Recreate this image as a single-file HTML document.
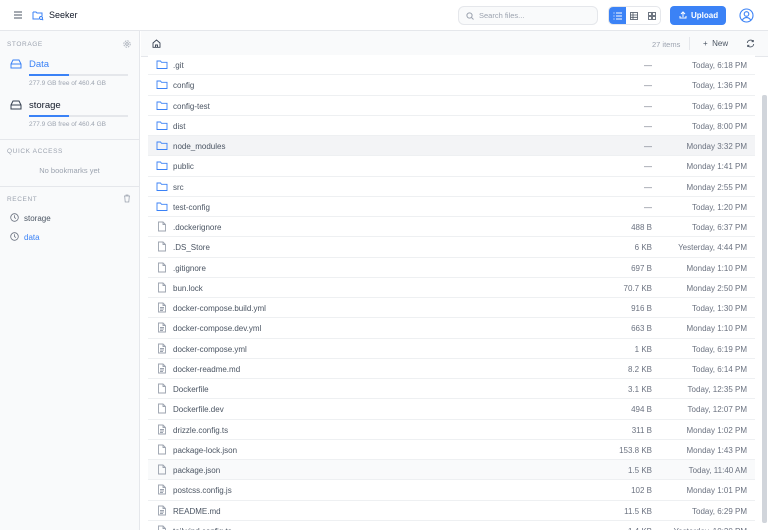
<!DOCTYPE html>
<html style="width:768px;height:530px;overflow:hidden"><head><meta charset="utf-8"><style>
*{box-sizing:border-box;margin:0;padding:0}
body{width:768px;height:530px;overflow:hidden;font-family:"Liberation Sans",sans-serif;background:#fff;position:relative;color:#374151}
.top{position:absolute;left:0;top:0;width:768px;height:31px;background:#fff;border-bottom:1px solid #e5e7eb}
.side{position:absolute;left:0;top:31px;width:140px;height:499px;background:#f9fafb;border-right:1px solid #e5e7eb}
.lbl{position:absolute;left:7px;font-size:6.5px;letter-spacing:.6px;color:#9ca3af}
.main{position:absolute;left:141px;top:31px;width:627px;height:499px}
.bar{position:absolute;left:0;top:0;width:627px;height:26px;background:#f9fafb;border-bottom:1px solid #e5e7eb}
#rows{position:absolute;left:0;top:0;width:768px;height:530px;overflow:hidden}
.row{position:absolute;left:148px;width:607px;height:20.25px;border-bottom:1px solid #eef0f2;font-size:8px;color:#4b5563}
.row .n{position:absolute;left:25px;top:6px}
.row .s{position:absolute;right:103px;top:6px;color:#6b7280}
.row .d{position:absolute;right:8px;top:6px;color:#6b7280}
.row svg{position:absolute;left:8px;top:4px}
</style></head><body>
<div class="top">
<svg style="position:absolute;left:13px;top:10px" width="10" height="10" viewBox="0 0 10 10"><path d="M1 2h8M1 5h8M1 8h8" stroke="#4b5563" stroke-width="1"/></svg>
<svg style="position:absolute;left:32px;top:9px" width="12" height="12" viewBox="0 0 12 12" fill="none" stroke="#3b82f6" stroke-width="1"><path d="M1 3v7h6M1 3h3l1 1h5v3"/><circle cx="9" cy="9" r="1.5"/><path d="M10 10l1.2 1.2"/></svg>
<div style="position:absolute;left:49px;top:10px;font-size:9px;color:#111827">Seeker</div>
<div style="position:absolute;left:458px;top:6px;width:140px;height:19px;border:1px solid #e5e7eb;border-radius:6px;background:#f9fafb"><svg style="position:absolute;left:7px;top:5px" width="8" height="8" viewBox="0 0 8 8" fill="none" stroke="#9ca3af"><circle cx="3.5" cy="3.5" r="2.6"/><path d="M5.5 5.5l2 2"/></svg><span style="position:absolute;left:20px;top:4px;font-size:7.5px;color:#9ca3af">Search files...</span></div>
<div style="position:absolute;left:608px;top:6px;width:53px;height:19px;border:1px solid #e5e7eb;border-radius:5px;background:#fff;overflow:hidden"><div style="position:absolute;left:0;top:0;width:17px;height:19px;background:#3b82f6"></div>
<svg style="position:absolute;left:4px;top:5px" width="9" height="8" viewBox="0 0 9 8" stroke="#fff"><path d="M3 1h6M3 4h6M3 7h6M0.5 1h1M0.5 4h1M0.5 7h1"/></svg>
<svg style="position:absolute;left:21px;top:5px" width="8" height="8" viewBox="0 0 8 8" fill="none" stroke="#4b5563" stroke-width=".8"><rect x=".5" y=".5" width="7" height="7"/><path d="M.5 3h7M.5 5.3h7M3 .5v7"/></svg>
<svg style="position:absolute;left:39px;top:5px" width="8" height="8" viewBox="0 0 8 8" fill="none" stroke="#4b5563" stroke-width=".8"><rect x=".5" y=".5" width="3" height="3"/><rect x="4.5" y=".5" width="3" height="3"/><rect x=".5" y="4.5" width="3" height="3"/><rect x="4.5" y="4.5" width="3" height="3"/></svg></div>
<div style="position:absolute;left:670px;top:6px;width:56px;height:19px;background:#3b82f6;border-radius:4px;color:#fff;font-size:8px;font-weight:bold"><svg style="position:absolute;left:9px;top:5px" width="8" height="8" viewBox="0 0 8 8" fill="none" stroke="#fff"><path d="M4 6V1M2 3l2-2 2 2M1 5v2h6V5"/></svg><span style="position:absolute;left:21px;top:5px">Upload</span></div>
<svg style="position:absolute;left:739px;top:8px" width="15" height="15" viewBox="0 0 15 15" fill="none" stroke="#3b82f6" stroke-width="1.1"><circle cx="7.5" cy="7.5" r="6.5"/><circle cx="7.5" cy="6" r="2.3"/><path d="M3.3 12.2c1-1.8 2.4-2.6 4.2-2.6s3.2.8 4.2 2.6"/></svg>
</div>
<div class="side">
<div class="lbl" style="top:10px">STORAGE</div>
<svg style="position:absolute;left:123px;top:9px" width="8" height="8" viewBox="0 0 8 8" fill="none" stroke="#9ca3af" stroke-width=".8"><circle cx="4" cy="4" r="1.3"/><circle cx="4" cy="4" r="3.2" stroke-dasharray="1.5 1"/></svg>
<svg style="position:absolute;left:10px;top:28px" width="12" height="10" viewBox="0 0 12 10" fill="none" stroke="#3b82f6"><path d="M1 5l2-4h6l2 4v4H1z M1 5h10"/></svg>
<div style="position:absolute;left:29px;top:28px;font-size:9.5px;color:#3b82f6">Data</div>
<div style="position:absolute;left:29px;top:43px;width:99px;height:2px;background:#e5e7eb"><div style="width:40px;height:2px;background:#3b82f6"></div></div>
<div style="position:absolute;left:29px;top:49px;font-size:6.5px;color:#9ca3af">277.9 GB free of 460.4 GB</div>
<svg style="position:absolute;left:10px;top:69px" width="12" height="10" viewBox="0 0 12 10" fill="none" stroke="#374151"><path d="M1 5l2-4h6l2 4v4H1z M1 5h10"/></svg>
<div style="position:absolute;left:29px;top:69px;font-size:9.5px;color:#111827">storage</div>
<div style="position:absolute;left:29px;top:84px;width:99px;height:2px;background:#e5e7eb"><div style="width:40px;height:2px;background:#3b82f6"></div></div>
<div style="position:absolute;left:29px;top:90px;font-size:6.5px;color:#9ca3af">277.9 GB free of 460.4 GB</div>
<div style="position:absolute;left:0;top:108px;width:139px;border-top:1px solid #e5e7eb"></div>
<div class="lbl" style="top:117px">QUICK ACCESS</div>
<div style="position:absolute;left:0;width:139px;top:135px;text-align:center;font-size:7.5px;color:#9ca3af">No bookmarks yet</div>
<div style="position:absolute;left:0;top:155px;width:139px;border-top:1px solid #e5e7eb"></div>
<div class="lbl" style="top:165px">RECENT</div>
<svg style="position:absolute;left:123px;top:163px" width="8" height="9" viewBox="0 0 8 9" fill="none" stroke="#9ca3af" stroke-width=".8"><path d="M1 2h6M3 2V1h2v1M1.7 2l.5 6h3.6l.5-6"/></svg>
<svg style="position:absolute;left:10px;top:182px" width="9" height="9" viewBox="0 0 9 9" fill="none" stroke="#6b7280" stroke-width=".8"><circle cx="4.5" cy="4.5" r="3.8"/><path d="M4.5 2.3v2.3l1.4 1"/></svg>
<div style="position:absolute;left:24px;top:183px;font-size:8px;color:#4b5563">storage</div>
<svg style="position:absolute;left:10px;top:201px" width="9" height="9" viewBox="0 0 9 9" fill="none" stroke="#6b7280" stroke-width=".8"><circle cx="4.5" cy="4.5" r="3.8"/><path d="M4.5 2.3v2.3l1.4 1"/></svg>
<div style="position:absolute;left:24px;top:202px;font-size:8px;color:#3b82f6">data</div>
</div>
<div class="main"><div class="bar">
<svg style="position:absolute;left:11px;top:8px" width="9" height="9" viewBox="0 0 9 9" fill="none" stroke="#374151" stroke-width=".9"><path d="M1 4L4.5 1 8 4v4.3H1z M3.5 8.3V6h2v2.3"/></svg>
<div style="position:absolute;left:511px;top:9px;font-size:7.5px;color:#9ca3af">27 items</div>
<div style="position:absolute;left:548px;top:6px;height:13px;border-left:1px solid #e5e7eb"></div>
<div style="position:absolute;left:562px;top:8px;font-size:8px;color:#4b5563">+&nbsp; New</div>
<svg style="position:absolute;left:605px;top:8px" width="9" height="9" viewBox="0 0 9 9" fill="none" stroke="#4b5563" stroke-width=".9"><path d="M1.3 4a3.3 3.3 0 0 1 6-1.5M7.7 5a3.3 3.3 0 0 1-6 1.5M7.3 1v1.7H5.6M1.7 8V6.3h1.7"/></svg>
</div>
</div>
<div id="rows"></div>
<div style="position:absolute;left:762px;top:95px;width:5px;height:428px;background:#d1d5db;border-radius:2px"></div>
<script>
var F='<svg width="12" height="11" viewBox="0 0 12 11" fill="none" stroke="#3b82f6" stroke-width=".9"><path d="M1 2h3.5l1 1.3H11v6.2H1z"/></svg>';
var P='<svg width="12" height="11" viewBox="0 0 12 11" fill="none" stroke="#9ca3af" stroke-width=".9"><path d="M2.5 1h4.5l2.5 2.5v6.5h-7z M7 1v2.5h2.5"/></svg>';
var T='<svg width="12" height="11" viewBox="0 0 12 11" fill="none" stroke="#9ca3af" stroke-width=".9"><path d="M2.5 1h4.5l2.5 2.5v6.5h-7z M7 1v2.5h2.5 M4 5.5h4M4 7h4M4 8.5h3"/></svg>';
var r=[[F,'.git','—','Today, 6:18 PM'],[F,'config','—','Today, 1:36 PM'],[F,'config-test','—','Today, 6:19 PM'],[F,'dist','—','Today, 8:00 PM'],[F,'node_modules','—','Monday 3:32 PM',1],[F,'public','—','Monday 1:41 PM'],[F,'src','—','Monday 2:55 PM'],[F,'test-config','—','Today, 1:20 PM'],[P,'.dockerignore','488 B','Today, 6:37 PM'],[P,'.DS_Store','6 KB','Yesterday, 4:44 PM'],[P,'.gitignore','697 B','Monday 1:10 PM'],[P,'bun.lock','70.7 KB','Monday 2:50 PM'],[T,'docker-compose.build.yml','916 B','Today, 1:30 PM'],[T,'docker-compose.dev.yml','663 B','Monday 1:10 PM'],[T,'docker-compose.yml','1 KB','Today, 6:19 PM'],[T,'docker-readme.md','8.2 KB','Today, 6:14 PM'],[P,'Dockerfile','3.1 KB','Today, 12:35 PM'],[P,'Dockerfile.dev','494 B','Today, 12:07 PM'],[T,'drizzle.config.ts','311 B','Monday 1:02 PM'],[P,'package-lock.json','153.8 KB','Monday 1:43 PM'],[P,'package.json','1.5 KB','Today, 11:40 AM',2],[T,'postcss.config.js','102 B','Monday 1:01 PM'],[T,'README.md','11.5 KB','Today, 6:29 PM'],[T,'tailwind.config.ts','1.4 KB','Yesterday, 10:20 PM']];
var h='';r.forEach(function(x,i){var bg=x[4]==1?'#f3f4f6':x[4]==2?'#f9fafb':'#fff';h+='<div class="row" style="top:'+(55+i*20.25)+'px;background:'+bg+'">'+x[0]+'<span class="n">'+x[1]+'</span><span class="s">'+x[2]+'</span><span class="d">'+x[3]+'</span></div>';});
document.getElementById('rows').innerHTML=h;
</script>
</body></html>
